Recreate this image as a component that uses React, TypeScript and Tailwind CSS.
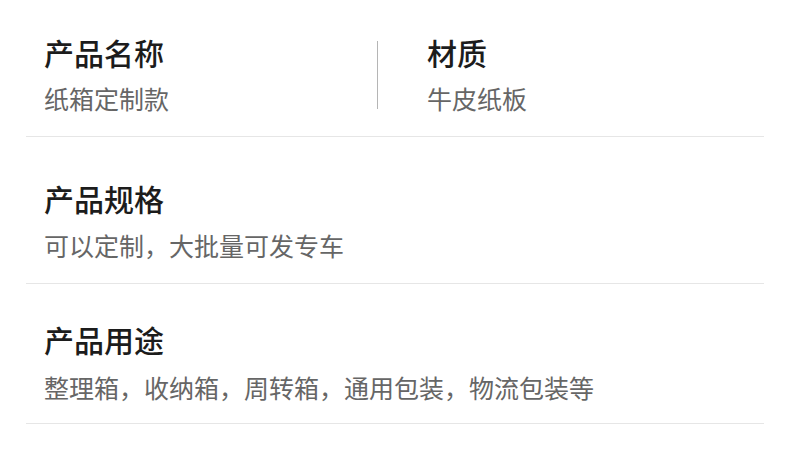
export default function App() {
  const font = { fontFamily: '"Noto Sans CJK SC", "Noto Sans", sans-serif' };
  return (
    <div className="w-[790px] h-[473px] bg-white" style={font}>
      <div className="mx-[26px]">
        <div className="flex border-b border-[#e6e6e6] pt-[37px] pb-[25px]">
          <div className="w-[351px] pl-[18px]">
            <div className="text-[30px] leading-[30px] font-medium text-[#1c1c1c]">产品名称</div>
            <div className="mt-[18px] text-[25px] leading-[26px] text-[#666666]">纸箱定制款</div>
          </div>
          <div className="w-px self-stretch bg-[#b5b5b5] mt-[4px] mb-[2px]" />
          <div className="flex-1 pl-[49px]">
            <div className="text-[30px] leading-[30px] font-medium text-[#1c1c1c]">材质</div>
            <div className="mt-[18px] text-[25px] leading-[26px] text-[#666666]">牛皮纸板</div>
          </div>
        </div>
        <div className="border-b border-[#e6e6e6] pl-[18px] pt-[46px] pb-[25px]">
          <div className="text-[30px] leading-[30px] font-medium text-[#1c1c1c]">产品规格</div>
          <div className="mt-[19px] text-[25px] leading-[26px] text-[#666666]">可以定制，大批量可发专车</div>
        </div>
        <div className="border-b border-[#e6e6e6] pl-[18px] pt-[40px] pb-[23px]">
          <div className="text-[30px] leading-[30px] font-medium text-[#1c1c1c]">产品用途</div>
          <div className="mt-[20px] text-[25px] leading-[26px] text-[#666666]">整理箱，收纳箱，周转箱，通用包装，物流包装等</div>
        </div>
      </div>
    </div>
  );
}
